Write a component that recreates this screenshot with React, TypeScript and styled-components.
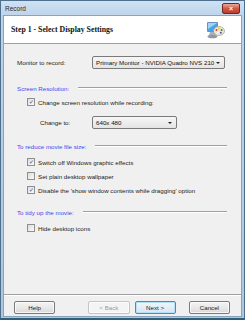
import styled, { createGlobalStyle } from "styled-components";

const GlobalStyle = createGlobalStyle`
  html, body {
    margin: 0;
    padding: 0;
    width: 245px;
    height: 320px;
    overflow: hidden;
  }
  body {
    font-family: "Liberation Sans", Arial, sans-serif;
    font-size: 6.2px;
    color: #1a1a1a;
    white-space: nowrap;
  }
`;

const Window = styled.div`
  width: 245px;
  height: 320px;
  box-sizing: border-box;
  display: flex;
  flex-direction: column;
  background: linear-gradient(#cfe1f3, #bcd3ea 16px, #adc6e0);
  border: 1px solid #4f6f8f;
  border-bottom: 2px solid #2f5f7a;
  padding: 0 2px 1px 2px;
`;

const TitleBar = styled.div`
  height: 14px;
  flex-shrink: 0;
  display: flex;
  align-items: center;
  justify-content: space-between;
  padding: 0 2px 0 2px;
`;

const Title = styled.span`
  font-size: 6.5px;
  color: #2a2a2a;
`;

const CloseButton = styled.div`
  width: 16px;
  height: 9px;
  margin-top: 1px;
  border-radius: 2px;
  border: 1px solid #6d2a20;
  background: linear-gradient(#e9a99b, #d05a44 50%, #c1392a);
  display: flex;
  align-items: center;
  justify-content: center;
  color: #fff;
  font-size: 7px;
  font-weight: bold;
  line-height: 1;
`;

const Client = styled.div`
  flex: 1;
  display: flex;
  flex-direction: column;
  background: #f0f0f0;
  border: 1px solid #8aa3bd;
`;

const Header = styled.div`
  height: 27px;
  flex-shrink: 0;
  background: #ffffff;
  border-bottom: 1px solid #a0a0a0;
  display: flex;
  align-items: center;
  justify-content: space-between;
  padding: 0 16px 0 7px;
`;

const HeaderTitle = styled.span`
  font-family: "Liberation Serif", "Times New Roman", serif;
  font-weight: bold;
  font-size: 7.8px;
  color: #111;
`;

const Body = styled.div`
  flex: 1;
  display: flex;
  flex-direction: column;
  padding: 12px 14px 0 13px;
`;

const FieldRow = styled.div<{ $mt?: number; $indent?: number }>`
  display: flex;
  align-items: center;
  height: 13px;
  margin-top: ${(p) => p.$mt ?? 0}px;
  padding-left: ${(p) => p.$indent ?? 0}px;
`;

const FieldLabel = styled.span<{ $width: number }>`
  width: ${(p) => p.$width}px;
  flex-shrink: 0;
`;

const Select = styled.div<{ $width: number }>`
  width: ${(p) => p.$width}px;
  height: 13px;
  box-sizing: border-box;
  border: 1px solid #7a7a7a;
  border-radius: 2px;
  background: linear-gradient(#f6f6f6, #e4e4e4);
  display: flex;
  align-items: center;
  justify-content: space-between;
  padding: 0 4px 0 3px;
  color: #111;
  overflow: hidden;
`;

const Arrow = styled.span`
  width: 0;
  height: 0;
  flex-shrink: 0;
  border-left: 2px solid transparent;
  border-right: 2px solid transparent;
  border-top: 2px solid #222;
`;

const SectionHeading = styled.div<{ $mt: number }>`
  display: flex;
  align-items: center;
  height: 10px;
  margin-top: ${(p) => p.$mt}px;
  color: #4646f0;
  gap: 9px;

  &::after {
    content: "";
    flex: 1;
    height: 0;
    border-top: 1px solid #a0a0a0;
    border-bottom: 1px solid #ffffff;
  }
`;

const CheckRow = styled.label<{ $mt: number }>`
  display: flex;
  align-items: center;
  height: 10px;
  margin-top: ${(p) => p.$mt}px;
  padding-left: 10px;
  gap: 3px;
`;

const Box = styled.span`
  width: 6px;
  height: 6px;
  flex-shrink: 0;
  border: 1px solid #8e8f8f;
  background: linear-gradient(135deg, #dcdcdc, #fbfbfb);
  display: flex;
  align-items: center;
  justify-content: center;
  color: #2c4a8c;
  font-size: 6px;
  line-height: 1;
`;

const Footer = styled.div`
  height: 21px;
  flex-shrink: 0;
  box-sizing: border-box;
  border-top: 1px solid #a0a0a0;
  box-shadow: inset 0 1px 0 #ffffff;
  display: flex;
  align-items: flex-start;
  padding: 6px 11px 0 10px;
  height: 22px;
`;

const Button = styled.div<{ $variant?: "default" | "disabled"; $ml?: number }>`
  width: 42px;
  height: 13px;
  box-sizing: border-box;
  margin-left: ${(p) => p.$ml ?? 0}px;
  border-radius: 2px;
  border: 1px solid
    ${(p) =>
      p.$variant === "default"
        ? "#3c8fc0"
        : p.$variant === "disabled"
        ? "#c2c4c6"
        : "#7a7a7a"};
  background: ${(p) =>
    p.$variant === "disabled"
      ? "#f4f4f4"
      : p.$variant === "default"
      ? "linear-gradient(#f0f6fb, #e2eef8 50%, #d6e6f3)"
      : "linear-gradient(#f3f3f3, #e9e9e9 50%, #d9d9d9)"};
  box-shadow: inset 0 0 0 1px
    ${(p) => (p.$variant === "default" ? "#b5e0f7" : "rgba(255,255,255,0.7)")};
  display: flex;
  align-items: center;
  justify-content: center;
  color: ${(p) => (p.$variant === "disabled" ? "#9a9a9a" : "#1a1a1a")};
`;

const DisplayIcon = () => (
  <svg width="20" height="20" viewBox="0 0 20 20">
    <rect x="2" y="2" width="11" height="10" rx="1" fill="#6f8fb8" />
    <rect x="3" y="3" width="9" height="8" fill="#4aa3e8" />
    <path d="M3 3 L12 3 L3 9 Z" fill="#9fd3f7" />
    <path d="M5 12 L10 12 L11 15 L4 15 Z" fill="#a7b2bf" />
    <ellipse cx="7.5" cy="16.5" rx="5" ry="1.8" fill="#8d99a6" />
    <ellipse cx="14" cy="11" rx="5.5" ry="4.5" fill="#f1e7d0" stroke="#9a8e74" strokeWidth="0.6" />
    <circle cx="11.5" cy="10" r="1" fill="#e03a2c" />
    <circle cx="14" cy="8.6" r="1" fill="#f2c21c" />
    <circle cx="16.6" cy="10" r="1" fill="#2e8b3e" />
    <circle cx="15.8" cy="12.8" r="1" fill="#2d5fd0" />
    <ellipse cx="12.8" cy="12.8" rx="0.9" ry="0.7" fill="#ffffff" />
  </svg>
);

const Check = ({ checked, label, mt }: { checked: boolean; label: string; mt: number }) => (
  <CheckRow $mt={mt}>
    <Box>{checked ? "✓" : ""}</Box>
    <span>{label}</span>
  </CheckRow>
);

export default function App() {
  return (
    <>
      <GlobalStyle />
      <Window>
        <TitleBar>
          <Title>Record</Title>
          <CloseButton>×</CloseButton>
        </TitleBar>
        <Client>
          <Header>
            <HeaderTitle>Step 1 - Select Display Settings</HeaderTitle>
            <DisplayIcon />
          </Header>
          <Body>
            <FieldRow>
              <FieldLabel $width={75}>Monitor to record:</FieldLabel>
              <Select $width={133}>
                <span>Primary Monitor - NVIDIA Quadro NVS 210</span>
                <Arrow />
              </Select>
            </FieldRow>

            <SectionHeading $mt={14}>Screen Resolution:</SectionHeading>
            <Check mt={4} checked label="Change screen resolution while recording:" />
            <FieldRow $mt={9} $indent={23}>
              <FieldLabel $width={52}>Change to:</FieldLabel>
              <Select $width={85}>
                <span>640x 480</span>
                <Arrow />
              </Select>
            </FieldRow>

            <SectionHeading $mt={12}>To reduce movie file size:</SectionHeading>
            <Check mt={6} checked label="Switch off Windows graphic effects" />
            <Check mt={4} checked={false} label="Set plain desktop wallpaper" />
            <Check mt={4} checked label="Disable the 'show window contents while dragging' option" />

            <SectionHeading $mt={12}>To tidy up the movie:</SectionHeading>
            <Check mt={6} checked={false} label="Hide desktop icons" />
          </Body>
          <Footer>
            <Button>Help</Button>
            <Button $variant="disabled" $ml={33}>
              &lt; Back
            </Button>
            <Button $variant="default" $ml={5}>
              Next &gt;
            </Button>
            <Button $ml={13}>Cancel</Button>
          </Footer>
        </Client>
      </Window>
    </>
  );
}
